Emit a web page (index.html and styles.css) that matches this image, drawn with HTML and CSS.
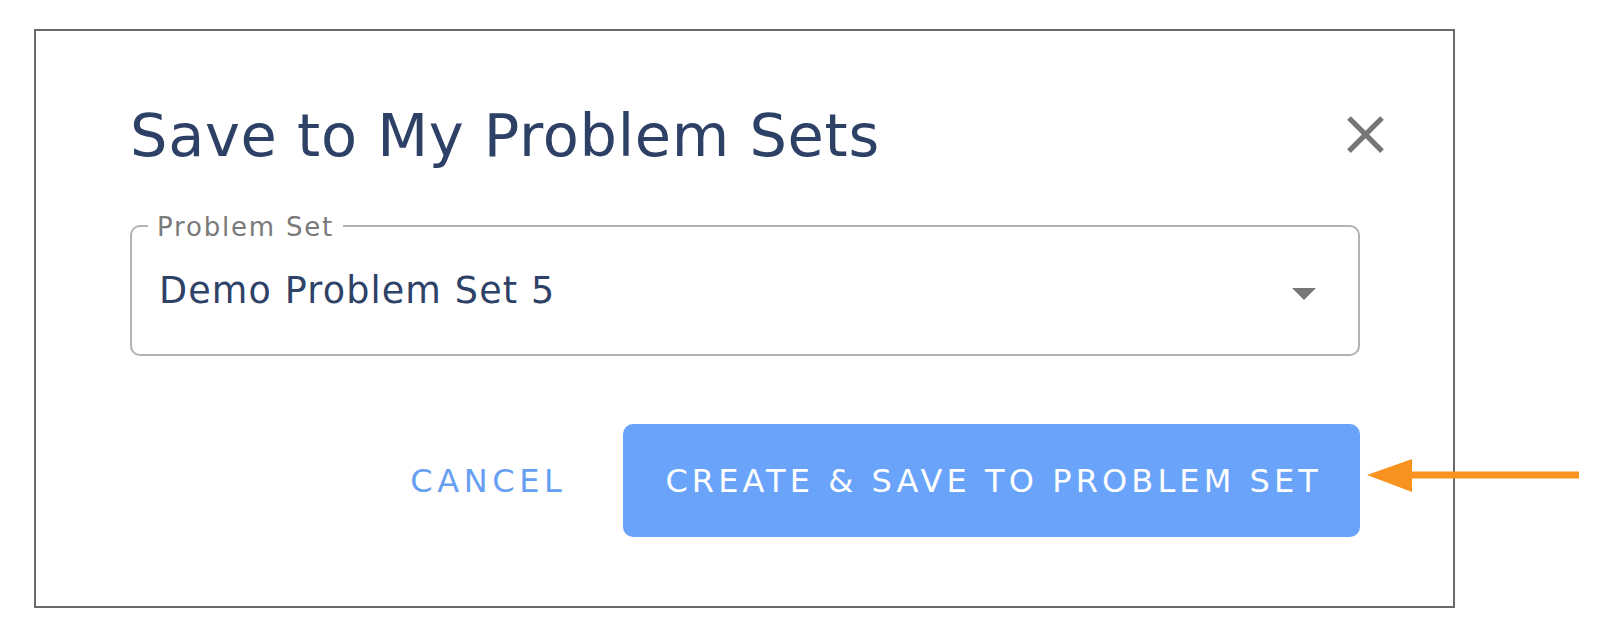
FILE: index.html
```html
<!DOCTYPE html>
<html lang="en">
<head>
<meta charset="utf-8">
<title>Save to My Problem Sets</title>
<link rel="stylesheet" href="styles.css">
</head>
<body>
<div class="page">
  <div class="dialog" role="dialog" aria-labelledby="dlg-title">
    <div class="dialog-header">
      <h2 class="dialog-title" id="dlg-title">Save to My Problem Sets</h2>
      <button class="close-btn" type="button" aria-label="Close">
        <svg viewBox="0 0 24 24" width="63" height="63" aria-hidden="true">
          <path d="M19 6.41L17.59 5 12 10.59 6.41 5 5 6.41 10.59 12 5 17.59 6.41 19 12 13.41 17.59 19 19 17.59 13.41 12z"/>
        </svg>
      </button>
    </div>
    <div class="field">
      <span class="field-label">Problem Set</span>
      <span class="field-value">Demo Problem Set 5</span>
      <svg class="field-caret" viewBox="0 0 24 12" width="24" height="12" aria-hidden="true">
        <polygon points="0,0 24,0 12,12"/>
      </svg>
    </div>
    <div class="dialog-actions">
      <button class="btn btn-text" type="button">CANCEL</button>
      <button class="btn btn-primary" type="button">CREATE &amp; SAVE TO PROBLEM SET</button>
    </div>
  </div>
  <svg class="pointer-arrow" viewBox="0 0 216 40" width="216" height="40" aria-hidden="true">
    <polygon points="2,20 47,4 47,37"/>
    <rect x="45" y="16.5" width="169" height="7"/>
  </svg>
</div>
</body>
</html>
```
FILE: styles.css
```css
* { box-sizing: border-box; }

html, body {
  margin: 0;
  padding: 0;
  background: #ffffff;
}

body {
  font-family: "DejaVu Sans", "Liberation Sans", sans-serif;
  width: 1600px;
  height: 637px;
  overflow: hidden;
}

.page {
  position: relative;
  padding: 29px 0 0 34px;
}

.dialog {
  width: 1421px;
  height: 579px;
  border: 2px solid #6a6a6a;
  background: #ffffff;
  padding: 69px 93px 69px 94px;
  display: flex;
  flex-direction: column;
}

.dialog-header {
  display: flex;
  align-items: center;
  justify-content: space-between;
  height: 72px;
}

.dialog-title {
  margin: 0;
  font-size: 59px;
  line-height: 72px;
  font-weight: 400;
  letter-spacing: 0.7px;
  color: #2d4066;
  white-space: nowrap;
}

.close-btn {
  border: 0;
  background: transparent;
  padding: 0;
  width: 63px;
  height: 63px;
  margin-right: -37px;
  margin-bottom: 4px;
  display: flex;
  cursor: pointer;
}

.close-btn svg {
  fill: #767676;
  display: block;
}

.field {
  position: relative;
  margin-top: 53px;
  height: 131px;
  border: 2px solid #b2b2b2;
  border-radius: 10px;
  display: flex;
  align-items: center;
  justify-content: space-between;
  padding: 0 42px 0 27px;
}

.field-label {
  position: absolute;
  left: 16px;
  top: -15px;
  padding: 0 9px;
  background: #ffffff;
  font-size: 26px;
  line-height: 30px;
  letter-spacing: 1.8px;
  color: #7a7a7a;
  white-space: nowrap;
}

.field-value {
  font-size: 36.5px;
  line-height: 44px;
  letter-spacing: 1.15px;
  color: #2e4167;
  white-space: nowrap;
}

.field-caret {
  display: block;
  fill: #767676;
  margin-top: 6px;
}

.dialog-actions {
  margin-top: 68px;
  display: flex;
  justify-content: flex-end;
  align-items: center;
  gap: 45px;
}

.btn {
  font-family: inherit;
  font-size: 32px;
  font-weight: 400;
  border: 0;
  cursor: pointer;
  white-space: nowrap;
}

.btn-text {
  background: transparent;
  color: #679ff2;
  letter-spacing: 4.6px;
  padding: 0 12px;
  height: 60px;
}

.btn-primary {
  height: 113px;
  background: #6aa4fa;
  color: #ffffff;
  border-radius: 10px;
  letter-spacing: 4.1px;
  padding: 0 38px 0 42px;
}

.pointer-arrow {
  position: absolute;
  left: 1365px;
  top: 455px;
  fill: #f7931e;
}
```
